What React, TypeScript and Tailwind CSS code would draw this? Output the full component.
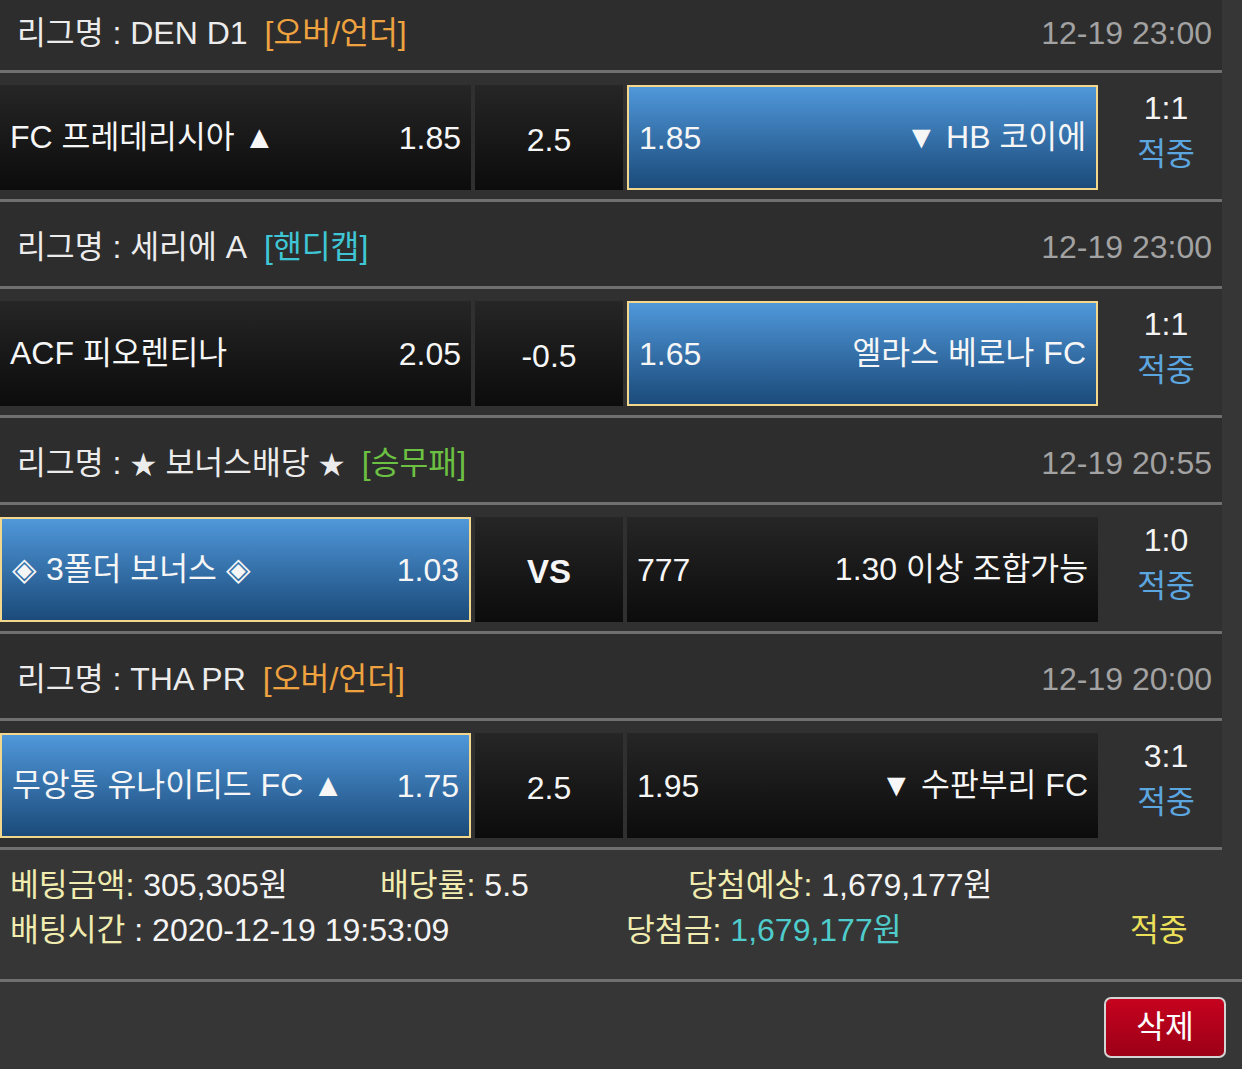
import clsx from "clsx";

const KO = /([\u1100-\u11FF\u3130-\u318F\uAC00-\uD7AF★]+)/;

// Hangul in the reference is a touch narrower than Noto CJK
function T({ s }: { s: string }) {
  const parts = s.split(KO);
  return (
    <>
      {parts.map((p, i) =>
        i % 2 === 1 ? (
          <span key={i} className={p === "★" ? "text-[0.82em]" : "text-[0.98em]"}>
            {p}
          </span>
        ) : (
          <span key={i}>{p}</span>
        )
      )}
    </>
  );
}

type Match = {
  league: string;
  tag: string;
  tagColor: string;
  date: string;
  home: [string, string];
  mid: string;
  away: [string, string];
  pick: "home" | "away";
  score: string;
  first?: boolean;
};

const matches: Match[] = [
  {
    league: "DEN D1",
    tag: "[오버/언더]",
    tagColor: "text-[#eea240]",
    date: "12-19 23:00",
    home: ["FC 프레데리시아 ▲", "1.85"],
    mid: "2.5",
    away: ["1.85", "▼ HB 코이에"],
    pick: "away",
    score: "1:1",
    first: true,
  },
  {
    league: "세리에 A",
    tag: "[핸디캡]",
    tagColor: "text-[#3fc6d6]",
    date: "12-19 23:00",
    home: ["ACF 피오렌티나", "2.05"],
    mid: "-0.5",
    away: ["1.65", "엘라스 베로나 FC"],
    pick: "away",
    score: "1:1",
  },
  {
    league: "★ 보너스배당 ★",
    tag: "[승무패]",
    tagColor: "text-[#6cc142]",
    date: "12-19 20:55",
    home: ["◈ 3폴더 보너스 ◈", "1.03"],
    mid: "VS",
    away: ["777", "1.30 이상 조합가능"],
    pick: "home",
    score: "1:0",
  },
  {
    league: "THA PR",
    tag: "[오버/언더]",
    tagColor: "text-[#eea240]",
    date: "12-19 20:00",
    home: ["무앙통 유나이티드 FC ▲", "1.75"],
    mid: "2.5",
    away: ["1.95", "▼ 수판부리 FC"],
    pick: "home",
    score: "3:1",
  },
];

function Cell({ left, right, selected }: { left: string; right: string; selected: boolean }) {
  return (
    <div
      className={clsx(
        "flex h-[105px] w-[471px] items-center justify-between whitespace-pre px-[10px] text-[#f6f6f6]",
        selected
          ? "border-2 border-[#f3d78c] bg-linear-to-b from-[#5098da] to-[#1b4b7b]"
          : "bg-linear-to-b from-[#262626] to-[#0c0c0c]"
      )}
    >
      <span>
        <T s={left} />
      </span>
      <span>
        <T s={right} />
      </span>
    </div>
  );
}

function Block({ m }: { m: Match }) {
  return (
    <>
      <div
        className={clsx(
          "flex items-center justify-between border-b-[3px] border-[#6f6f6f] bg-[#2d2d2d] pl-[17px] pr-[10px]",
          m.first ? "h-[73px] pb-1" : "h-[87px] pt-[6px]"
        )}
      >
        <div className="whitespace-pre text-[#ececec]">
          <T s={"리그명 : " + m.league} />
          <span className={clsx("ml-[17px]", m.tagColor)}>
            <T s={m.tag} />
          </span>
        </div>
        <div className="text-[#a2a2a2]">{m.date}</div>
      </div>
      <div className="flex h-[129px] items-start border-b-[3px] border-[#6f6f6f] bg-[#303030] pt-[12px]">
        <Cell left={m.home[0]} right={m.home[1]} selected={m.pick === "home"} />
        <div
          className={clsx(
            "mx-[4px] flex h-[105px] w-[148px] items-center justify-center bg-linear-to-b from-[#262626] to-[#0c0c0c] pt-1 text-[#f6f6f6]",
            m.mid === "VS" && "font-bold text-[33px]"
          )}
        >
          {m.mid}
        </div>
        <Cell left={m.away[0]} right={m.away[1]} selected={m.pick === "away"} />
        <div className="flex w-[124px] flex-col items-center pl-[12px] leading-[46px]">
          <span className="text-[#f4f4f4]">{m.score}</span>
          <span className="text-[#5ca6e0]">
            <T s="적중" />
          </span>
        </div>
      </div>
    </>
  );
}

export default function App() {
  return (
    <div
      className="min-h-screen bg-[#363636] text-[32px] leading-none"
      style={{ fontFamily: '"Liberation Sans", Arial, "Noto Sans CJK KR", sans-serif' }}
    >
      <div className="w-[1222px]">
        {matches.map((m, i) => (
          <Block key={i} m={m} />
        ))}
      </div>

      <div className="border-b-[3px] border-[#707070] pb-[26px] pl-[10px] pt-[13px] leading-[45px]">
        <div className="flex whitespace-pre">
          <div className="w-[370px]">
            <span className="text-[#f1ecb0]">
              <T s="베팅금액:" />
            </span>
            <span className="text-[#f4f4f4]">
              <T s=" 305,305원" />
            </span>
          </div>
          <div className="w-[308px]">
            <span className="text-[#f1ecb0]">
              <T s="배당률:" />
            </span>
            <span className="text-[#f4f4f4]"> 5.5</span>
          </div>
          <div>
            <span className="text-[#f1ecb0]">
              <T s="당첨예상:" />
            </span>
            <span className="text-[#f4f4f4]">
              <T s=" 1,679,177원" />
            </span>
          </div>
        </div>
        <div className="flex whitespace-pre">
          <div className="w-[616px]">
            <span className="text-[#f1ecb0]">
              <T s="배팅시간" />
            </span>
            <span className="text-[#f4f4f4]"> : 2020-12-19 19:53:09</span>
          </div>
          <div className="w-[504px]">
            <span className="text-[#f1ecb0]">
              <T s="당첨금:" />
            </span>
            <span className="text-[#4fcccc]">
              <T s=" 1,679,177원" />
            </span>
          </div>
          <div className="text-[#ece05a]">
            <T s="적중" />
          </div>
        </div>
      </div>

      <div className="flex justify-end pr-[16px] pt-[15px]">
        <button className="flex h-[61px] w-[122px] items-center justify-center rounded-[7px] border-2 border-[#d4d4d4] bg-linear-to-b from-[#c6031f] to-[#9c0017] text-white">
          <T s="삭제" />
        </button>
      </div>
    </div>
  );
}
